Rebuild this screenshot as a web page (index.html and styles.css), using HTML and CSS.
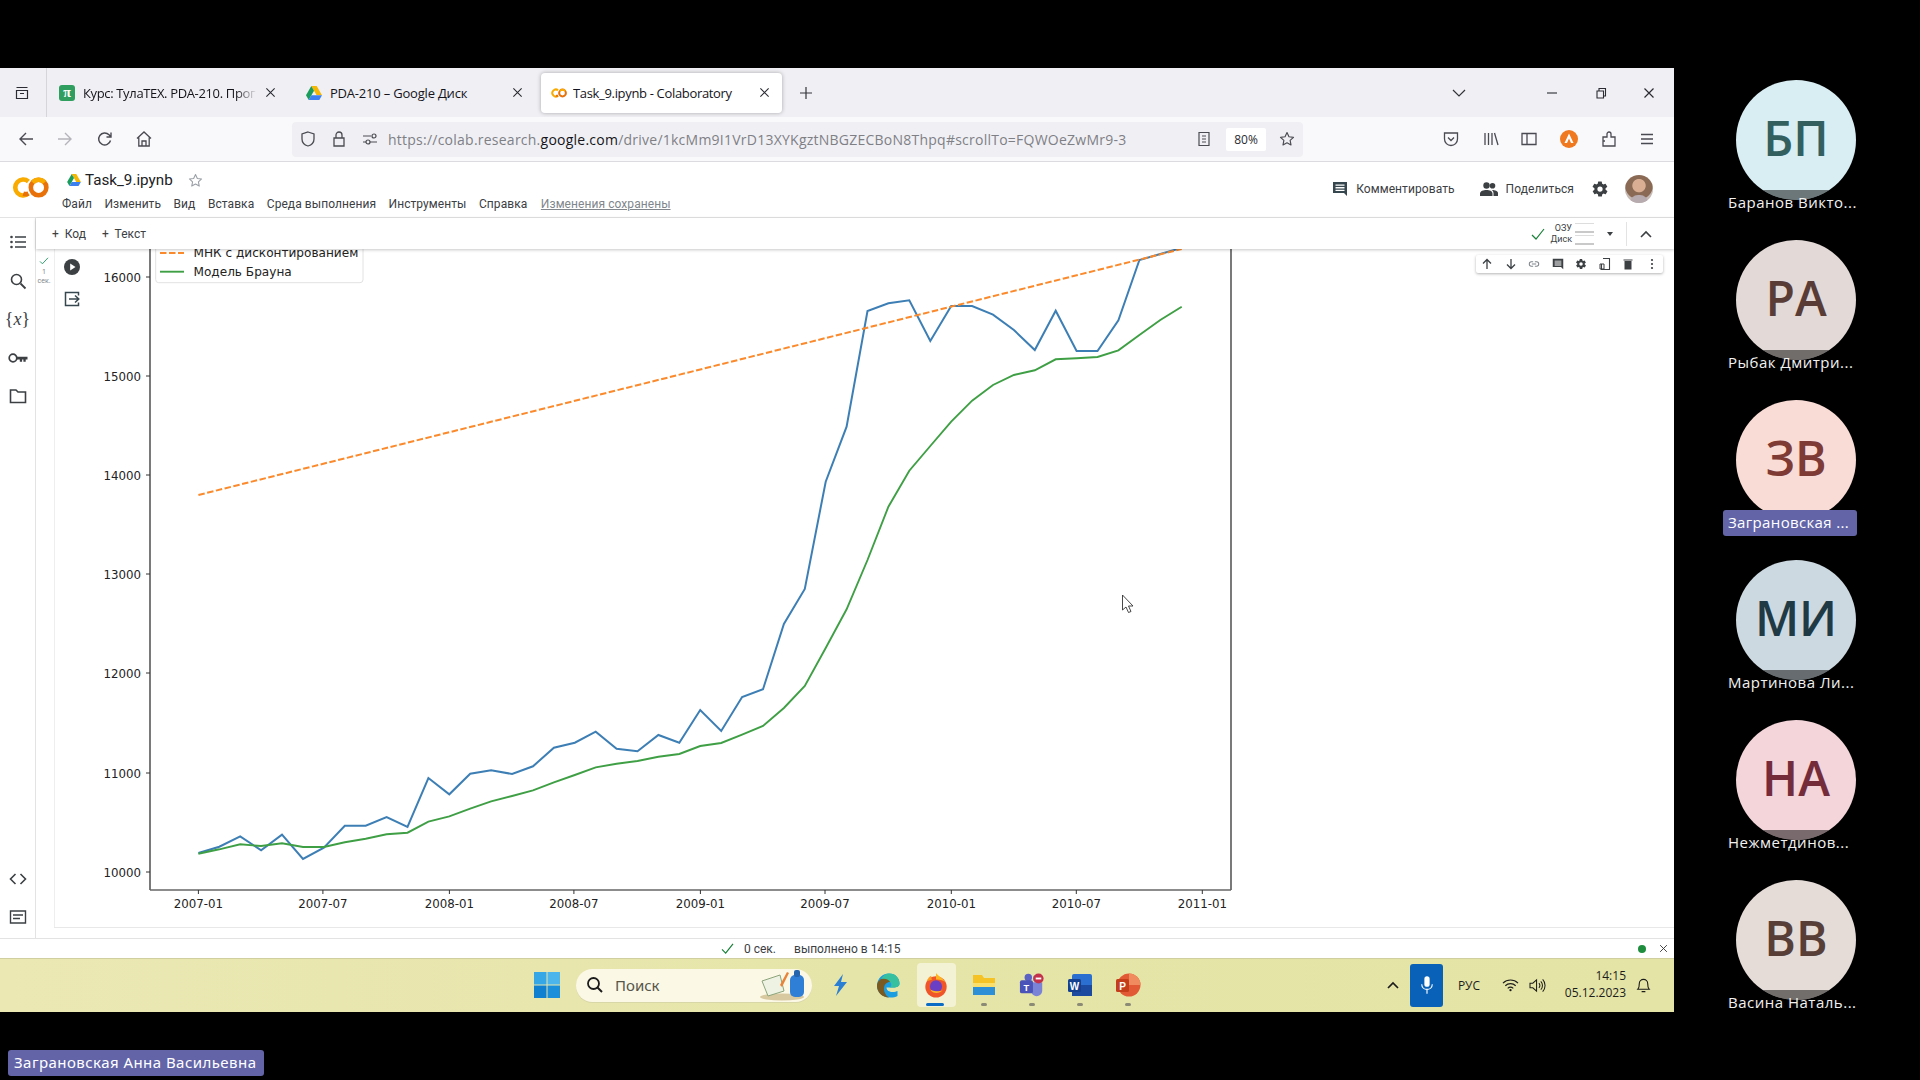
FILE: index.html
```html
<!DOCTYPE html>
<html lang="ru">
<head>
<meta charset="utf-8">
<title>Task_9.ipynb - Colaboratory</title>
<link rel="stylesheet" href="styles.css">
</head>
<body>
<svg class="defs" aria-hidden="true">
  <symbol id="i-colab" viewBox="0 0 35 20">
    <path d="M15.5 4.2A7.6 7.6 0 1 0 15.5 15.8" fill="none" stroke="#f9ab00" stroke-width="4.4"/>
    <path d="M10.6 15.8A7.6 7.6 0 0 0 15.5 15.8" fill="none" stroke="#e8710a" stroke-width="4.4"/>
    <circle cx="25.2" cy="10" r="7.4" fill="none" stroke="#e8710a" stroke-width="4.4"/>
    <path d="M19.6 5.2A7.4 7.4 0 0 1 30.8 5.2" fill="none" stroke="#f9ab00" stroke-width="4.4"/>
  </symbol>
  <symbol id="i-drive" viewBox="0 0 16 14">
    <path d="M5.3 0h5.4l5.3 9.2h-5.4z" fill="#f6b704"/>
    <path d="M5.3 0 0 9.2l2.7 4.8 5.3-9.2z" fill="#1a9c5b"/>
    <path d="M5.4 9.2H16L13.3 14H2.700z" fill="#3c7ff0"/>
  </symbol>
  <symbol id="i-x" viewBox="0 0 12 12"><path d="M1.500 1.500l9 9M10.500 1.500l-9 9" fill="none" stroke="currentColor" stroke-width="1.200"/></symbol>
  <symbol id="i-star" viewBox="0 0 18 18"><path d="M9 1.800l2.200 4.700 5.100.6-3.800 3.500 1 5.100L9 13.200l-4.500 2.500 1-5.100L1.700 7.100l5.100-.6z" fill="none" stroke="currentColor" stroke-width="1.300" stroke-linejoin="round"/></symbol>
  <symbol id="i-gear" viewBox="0 0 24 24"><path fill="currentColor" d="M19.400 13a7.500 7.500 0 0 0 0-2l2.100-1.600a.5.5 0 0 0 .1-.6l-2-3.500a.5.5 0 0 0-.6-.2l-2.500 1a7.300 7.300 0 0 0-1.700-1l-.4-2.700a.5.500 0 0 0-.5-.4h-4a.5.500 0 0 0-.5.4l-.4 2.700a7.300 7.300 0 0 0-1.700 1l-2.500-1a.5.500 0 0 0-.6.2l-2 3.500a.5.500 0 0 0 .1.600L4.600 11a7.500 7.500 0 0 0 0 2l-2.100 1.600a.5.500 0 0 0-.1.600l2 3.500c.1.200.4.300.6.200l2.500-1c.5.400 1.100.7 1.700 1l.4 2.700c0 .2.200.4.500.4h4c.3 0 .5-.2.500-.4l.4-2.700c.6-.3 1.200-.6 1.700-1l2.500 1c.2.100.5 0 .6-.2l2-3.500a.5.500 0 0 0-.1-.6zM12 15.500a3.500 3.500 0 1 1 0-7 3.500 3.500 0 0 1 0 7z"/></symbol>
  <symbol id="i-comment" viewBox="0 0 16 16"><path fill="currentColor" d="M1 1h14v14l-3-3H1zM3.500 3.500v1.300h9V3.500zm0 2.600v1.300h9V6.100zm0 2.600V10h9V8.700z" fill-rule="evenodd"/></symbol>
</svg>

<div class="stage">
  <div class="share">
    <div class="window">

      <div class="tabbar">
        <div class="tab-side">
          <svg class="ico16" viewBox="0 0 16 16"><path d="M2.500 2.500h11M2.500 5.500h11v8h-11zM6 8.500h4" fill="none" stroke="#2b2b33" stroke-width="1.200"/></svg>
        </div>
        <div class="tab">
          <span class="fav-pi">π</span>
          <span class="tab-title fade">Курс: ТулаТЕХ. PDA-210. Прог</span>
          <svg class="tab-x"><use href="#i-x"/></svg>
        </div>
        <div class="tab">
          <svg class="fav"><use href="#i-drive"/></svg>
          <span class="tab-title">PDA-210 – Google Диск</span>
          <svg class="tab-x"><use href="#i-x"/></svg>
        </div>
        <div class="tab tab-active">
          <svg class="fav"><use href="#i-colab"/></svg>
          <span class="tab-title tab-title-active">Task_9.ipynb - Colaboratory</span>
          <svg class="tab-x"><use href="#i-x"/></svg>
        </div>
        <svg class="tab-plus" viewBox="0 0 14 14"><path d="M7 1v12M1 7h12" stroke="#33333a" stroke-width="1.200"/></svg>
        <svg class="tab-list" viewBox="0 0 14 8"><path d="M1 1l6 6 6-6" fill="none" stroke="#33333a" stroke-width="1.200"/></svg>
        <div class="win-btn"><svg class="ico12" viewBox="0 0 12 12"><path d="M1 6h10" stroke="#2b2b33" stroke-width="1.100"/></svg></div>
        <div class="win-btn"><svg class="ico12" viewBox="0 0 12 12"><path d="M2 4h6.500v7H2zM4 4V1.500h6.500V9H8.500" fill="none" stroke="#2b2b33" stroke-width="1.100"/></svg></div>
        <div class="win-btn"><svg class="ico12"><use href="#i-x"/></svg></div>
      </div>

      <div class="navbar">
        <svg class="nav nav-back" viewBox="0 0 18 18"><path d="M16 9H3M9 3L3 9l6 6" fill="none" stroke="#4a4a52" stroke-width="1.400"/></svg>
        <svg class="nav nav-fwd" viewBox="0 0 18 18"><path d="M2 9h13M9 3l6 6-6 6" fill="none" stroke="#b4b4ba" stroke-width="1.400"/></svg>
        <svg class="nav nav-reload" viewBox="0 0 18 18"><path d="M14.500 10.500A6 6 0 1 1 13 4.800L15 7M15 2.500V7h-4.500" fill="none" stroke="#4a4a52" stroke-width="1.400"/></svg>
        <svg class="nav nav-home" viewBox="0 0 18 18"><path d="M2 8.500L9 2l7 6.500M3.800 7.500V16h10.400V7.500M7 16v-5h4v5" fill="none" stroke="#4a4a52" stroke-width="1.300"/></svg>
        <div class="urlbar">
          <svg class="ico16" viewBox="0 0 16 16"><path d="M8 1l6 2v5c0 3.500-2.500 6-6 7-3.500-1-6-3.500-6-7V3z" fill="none" stroke="#4a4a52" stroke-width="1.300"/></svg>
          <svg class="ico16 url-lock" viewBox="0 0 16 16"><path d="M3 7h10v8H3zM5 7V4a3 3 0 0 1 6 0v3" fill="none" stroke="#4a4a52" stroke-width="1.300"/></svg>
          <svg class="ico16 url-tune" viewBox="0 0 16 16"><path d="M1 5h8M1 11h3M8 11h7" stroke="#4a4a52" stroke-width="1.200"/><circle cx="12" cy="5" r="2" fill="none" stroke="#4a4a52" stroke-width="1.200"/><circle cx="6" cy="11" r="2" fill="none" stroke="#4a4a52" stroke-width="1.200"/></svg>
          <div class="url"><span class="url-dim">https://colab.research.</span><span class="url-host">google.com</span><span class="url-dim">/drive/1kcMm9I1VrD13XYKgztNBGZECBoN8Thpq#scrollTo=FQWOeZwMr9-3</span></div>
          <svg class="ico16" viewBox="0 0 16 16"><path d="M3 1.500h10v13H3zM6 5h4M6 8h4M6 11h4" fill="none" stroke="#4a4a52" stroke-width="1.200"/></svg>
          <div class="zoombox">80%</div>
          <svg class="ico16 url-star"><use href="#i-star"/></svg>
        </div>
        <svg class="tool tool-first" viewBox="0 0 18 18"><path d="M2.500 3h13v6a6.500 6.500 0 0 1-13 0z" fill="none" stroke="#4a4a52" stroke-width="1.300"/><path d="M6 7.500l3 3 3-3" fill="none" stroke="#4a4a52" stroke-width="1.300"/></svg>
        <svg class="tool tool-lib" viewBox="0 0 18 18"><path d="M3 3v12M6.500 3v12M10 3v12M12.500 3l3.500 12" fill="none" stroke="#4a4a52" stroke-width="1.300"/></svg>
        <svg class="tool tool-side" viewBox="0 0 18 18"><path d="M2 3.500h14v11H2zM7 3.500v11" fill="none" stroke="#4a4a52" stroke-width="1.300"/></svg>
        <svg class="tool tool-ava" viewBox="0 0 18 18"><circle cx="9" cy="9" r="9" fill="#f0781e"/><path d="M9 3.500L13.500 13H11L9 8.500 7 13H4.500z" fill="#fff"/></svg>
        <svg class="tool tool-ext" viewBox="0 0 18 18"><path d="M3 7h4V4a2 2 0 0 1 4 0v3h4v9H3zM3 11h2" fill="none" stroke="#4a4a52" stroke-width="1.300"/></svg>
        <svg class="tool tool-side" viewBox="0 0 18 18"><path d="M3 4.500h12M3 9h12M3 13.500h12" stroke="#4a4a52" stroke-width="1.300"/></svg>
      </div>

      <div class="colab-head">
        <svg class="colab-logo"><use href="#i-colab"/></svg>
        <div class="doc">
          <div class="doc-title">
            <svg class="doc-drive"><use href="#i-drive"/></svg>
            <span class="doc-name">Task_9.ipynb</span>
            <svg class="doc-star"><use href="#i-star"/></svg>
          </div>
          <div class="menu">
            <span>Файл</span><span>Изменить</span><span>Вид</span><span>Вставка</span><span>Среда выполнения</span><span>Инструменты</span><span>Справка</span><span class="saved">Изменения сохранены</span>
          </div>
        </div>
        <div class="head-right">
          <svg class="ico16"><use href="#i-comment"/></svg>
          <span class="head-link">Комментировать</span>
          <svg class="head-people" viewBox="0 0 18 14"><circle cx="6.500" cy="3.500" r="3.200" fill="#3c4043"/><circle cx="12.500" cy="3.800" r="2.800" fill="#3c4043"/><path d="M0 14v-2.500C0 9 3.500 8 6.500 8s6 1 6 3.500V14zM13.500 14v-3c0-1-.5-2-1.500-3 3 0 6 1 6 3v3z" fill="#3c4043"/></svg>
          <span class="head-link">Поделиться</span>
          <svg class="head-gear"><use href="#i-gear"/></svg>
          <div class="user-pic"><span class="user-face"></span></div>
        </div>
      </div>

      <div class="workspace">
        <div class="rail">
          <svg class="rail-ico" viewBox="0 0 18 18"><path d="M6 4h11M6 9h11M6 14h11" stroke="#3c4043" stroke-width="1.600"/><circle cx="2.500" cy="4" r="1.300" fill="#3c4043"/><circle cx="2.500" cy="9" r="1.300" fill="#3c4043"/><circle cx="2.500" cy="14" r="1.300" fill="#3c4043"/></svg>
          <svg class="rail-ico" viewBox="0 0 18 18"><circle cx="7.500" cy="7.500" r="5" fill="none" stroke="#3c4043" stroke-width="1.600"/><path d="M11.500 11.500L16.500 16.500" stroke="#3c4043" stroke-width="1.800"/></svg>
          <span class="rail-x">{<i>x</i>}</span>
          <svg class="rail-key" viewBox="0 0 20 14"><circle cx="5" cy="7" r="3.800" fill="none" stroke="#3c4043" stroke-width="1.700"/><path d="M8.500 5.800h11v2.600h-1.800v2.300h-2.300V8.400h-1.300v2.300h-2.300V8.400H8.500z" fill="#3c4043"/></svg>
          <svg class="rail-ico" viewBox="0 0 18 18"><path d="M1.500 3h5.500l2 2h7.500v10.500h-15z" fill="none" stroke="#3c4043" stroke-width="1.600"/></svg>
          <svg class="rail-ico rail-bottom" viewBox="0 0 18 18"><path d="M6.500 4L1.500 9l5 5M11.500 4l5 5-5 5" fill="none" stroke="#3c4043" stroke-width="1.600"/></svg>
          <svg class="rail-ico" viewBox="0 0 18 18"><path d="M1.500 3h15v12h-15zM4 7h10M4 10.500h7" fill="none" stroke="#3c4043" stroke-width="1.400"/></svg>
        </div>
        <div class="work-main">
          <div class="cell-bar">
            <span class="add">+ Код</span>
            <span class="add">+ Текст</span>
            <div class="res">
              <svg class="res-check" viewBox="0 0 14 12"><path d="M1 7l4 4 8-10" fill="none" stroke="#188038" stroke-width="1.200"/></svg>
              <div class="res-labels"><span>ОЗУ</span><span>Диск</span></div>
              <div class="res-bars"><span></span><span></span></div>
              <span class="res-drop"></span>
              <span class="res-sep"></span>
              <svg class="res-up" viewBox="0 0 12 8"><path d="M1 7l5-5 5 5" fill="none" stroke="#3c4043" stroke-width="1.600"/></svg>
            </div>
          </div>
          <div class="notebook">
            <div class="cell">
              <div class="exec">
                <svg class="exec-check" viewBox="0 0 12 10"><path d="M1 5.500l3 3 7-7.500" fill="none" stroke="#2a9d6a" stroke-width="1.200"/></svg>
                <span class="exec-n">1</span>
                <span class="exec-s">сек.</span>
              </div>
              <div class="run">
                <svg class="run-play" viewBox="0 0 16 16"><circle cx="8" cy="8" r="8" fill="#3c4043"/><path d="M6.200 4.500l5.300 3.500-5.300 3.500z" fill="#fff"/></svg>
                <svg class="run-out" viewBox="0 0 16 16"><path d="M14.500 4.500V1.500h-13v13h13v-3M5 8h9.500M11 4.500L14.800 8 11 11.500" fill="none" stroke="#37474f" stroke-width="1.500"/></svg>
              </div>
              <svg class="chart" viewBox="90 249 1150 679">
                <rect x="155.700" y="225" width="207.300" height="57.700" rx="3" class="legend-box"/>
                <path d="M150 240V890M1231 240V890" class="spine"/>
                <path d="M150 890H1231" class="spine-bottom"/>
                <path d="M146 277H150M146 376H150M146 475H150M146 574H150M146 673H150M146 773H150M146 872H150" class="tick"/>
                <path d="M198.400 890v4M322.900 890v4M449.400 890v4M573.900 890v4M700.400 890v4M825 890v4M951.300 890v4M1076.300 890v4M1202.300 890v4" class="tick"/>
                <g class="ylabels">
                  <text x="141" y="281.500">16000</text>
                  <text x="141" y="380.500">15000</text>
                  <text x="141" y="479.500">14000</text>
                  <text x="141" y="578.500">13000</text>
                  <text x="141" y="677.500">12000</text>
                  <text x="141" y="777.500">11000</text>
                  <text x="141" y="876.500">10000</text>
                </g>
                <g class="xlabels">
                  <text x="198.400" y="907.500">2007-01</text>
                  <text x="322.900" y="907.500">2007-07</text>
                  <text x="449.400" y="907.500">2008-01</text>
                  <text x="573.900" y="907.500">2008-07</text>
                  <text x="700.400" y="907.500">2009-01</text>
                  <text x="825" y="907.500">2009-07</text>
                  <text x="951.300" y="907.500">2010-01</text>
                  <text x="1076.300" y="907.500">2010-07</text>
                  <text x="1202.300" y="907.500">2011-01</text>
                </g>
                <polyline class="line-blue" points="198.400,853 219.300,846.700 240.200,836.300 261.100,850.300 282,834.700 303,859 323.900,847.700 344.800,825.700 365.700,825.700 386.600,817 407.500,827 428.400,778 449.300,794.300 470.200,773.700 491.100,770.300 512.100,774 533,766.300 553.900,747.700 574.800,742.700 595.700,731.700 616.600,748.700 637.500,751.300 658.400,735 679.300,742.700 700.200,710 721.200,731 742.100,697 763,689.300 783.900,624 804.800,589 825.700,481.700 846.600,426.700 867.500,311 888.400,303.300 909.300,300.300 930.300,341 951.200,306 972.100,306 993,314.700 1013.900,330 1034.800,350 1055.700,310.700 1076.600,351 1097.500,351 1118.400,320.300 1139.400,260 1160.300,254 1181.200,248"/>
                <line class="line-orange" x1="198.400" y1="495" x2="1181.700" y2="249"/>
                <polyline class="line-green" points="198.400,853.700 219.300,849.300 240.200,844.300 261.100,846 282,843.300 303,847 323.900,847 344.800,842.300 365.700,838.700 386.600,834.300 407.500,832.700 428.400,821.700 449.300,816.300 470.200,808.700 491.100,801.300 512.100,796 533,790.300 553.900,782.300 574.800,775 595.700,767.300 616.600,763.700 637.500,761 658.400,756.700 679.300,754 700.200,746 721.200,743 742.100,734.700 763,726 783.900,708 804.800,686 825.700,648 846.600,609.300 867.500,560 888.400,506.700 909.300,470.700 930.300,446 951.200,421.700 972.100,400.700 993,385 1013.900,375 1034.800,370.300 1055.700,359.300 1076.600,358.300 1097.500,357 1118.400,350.300 1139.400,335 1160.300,320 1181.700,306.700"/>
                <line class="line-orange" x1="160" y1="253" x2="184" y2="253"/>
                <line class="line-green" x1="160" y1="271.700" x2="184" y2="271.700"/>
                <text class="legend-text" x="193.500" y="257">МНК с дисконтированием</text>
                <text class="legend-text" x="193.500" y="276">Модель Брауна</text>
                <path class="cursor" d="M1122.500 595v15l3.500-3 2.500 5.500 2.500-1-2.500-5.500h4.500z"/>
              </svg>
            </div>
            <div class="cell-tools">
              <svg class="ct" viewBox="0 0 12 12"><path d="M6 11V1.500M2 5.500l4-4 4 4" fill="none" stroke="#3c4043" stroke-width="1.300"/></svg>
              <svg class="ct" viewBox="0 0 12 12"><path d="M6 1v9.500M2 6.500l4 4 4-4" fill="none" stroke="#3c4043" stroke-width="1.300"/></svg>
              <svg class="ct" viewBox="0 0 14 12"><path d="M6 3.500H4a2.500 2.500 0 0 0 0 5h2M8 3.500h2a2.500 2.500 0 0 1 0 5H8M4.500 6h5" fill="none" stroke="#80868b" stroke-width="1.200"/></svg>
              <svg class="ct"><use href="#i-comment"/></svg>
              <svg class="ct"><use href="#i-gear"/></svg>
              <svg class="ct" viewBox="0 0 12 12"><path d="M4 .5h6.500v11H2.500V6" fill="none" stroke="#3c4043" stroke-width="1.100"/><path d="M1 6h4v5H1z" fill="none" stroke="#3c4043" stroke-width="1"/></svg>
              <svg class="ct" viewBox="0 0 12 12"><path d="M2.500 3h7v8.500h-7zM1.500 1.500h9v1h-9z" fill="#3c4043"/></svg>
              <svg class="ct" viewBox="0 0 12 12"><circle cx="6" cy="2" r="1.100" fill="#3c4043"/><circle cx="6" cy="6" r="1.100" fill="#3c4043"/><circle cx="6" cy="10" r="1.100" fill="#3c4043"/></svg>
            </div>
          </div>
        </div>
      </div>

      <div class="statusbar">
        <svg class="st-check" viewBox="0 0 14 12"><path d="M1 7l4 4 8-10" fill="none" stroke="#188038" stroke-width="1.300"/></svg>
        <span class="st-time">0 сек.</span>
        <span class="st-done">выполнено в 14:15</span>
        <span class="st-dot"></span>
        <svg class="st-x"><use href="#i-x"/></svg>
      </div>

      <div class="taskbar">
        <svg class="win-logo" viewBox="0 0 26 26"><rect width="12.500" height="12.500" fill="#35a7e6"/><rect x="13.500" width="12.500" height="12.500" fill="#4cb6ec"/><rect y="13.500" width="12.500" height="12.500" fill="#0f7fd0"/><rect x="13.500" y="13.500" width="12.500" height="12.500" fill="#1c8fdb"/></svg>
        <div class="search">
          <svg class="search-q" viewBox="0 0 18 18"><circle cx="7.500" cy="7.500" r="5.500" fill="none" stroke="#1c1c1c" stroke-width="1.800"/><path d="M11.500 11.500L16 16" stroke="#1c1c1c" stroke-width="2"/></svg>
          <span class="search-text">Поиск</span>
          <svg class="search-art" viewBox="0 0 46 32"><ellipse cx="22" cy="28" rx="22" ry="3.500" fill="#d9c9a0"/><path d="M2 12l18-6 4 16-16 5z" fill="#eef2e2" stroke="#8aa47a"/><path d="M20 16L27 3l2 1-7 14z" fill="#e8843a"/><rect x="30" y="6" width="14" height="22" rx="5" fill="#2f7fd6"/><rect x="34" y="1" width="6" height="7" rx="2" fill="#2565ad"/></svg>
        </div>
        <div class="apps">
          <div class="app">
            <svg class="app-ico" viewBox="0 0 26 26"><path d="M16 2L7 14h5l-3 10 11-14h-6z" fill="#2a7fd5"/></svg>
          </div>
          <div class="app">
            <svg class="app-ico" viewBox="0 0 26 26"><path d="M2 14C2 6 8 1.500 14 1.500c7 0 10.500 5 10.500 10 0 3-3 4-6 4h-7c0 3 3 4.500 6 4.500 2 0 4-.5 5-1v5c-2 1-4 1.500-7 1.500C7 25.500 2 20 2 14z" fill="#1b9de2"/><path d="M2 14c0-5 4-8 8-8 3 0 5 2 5 4-3 0-6 2-6 7 0 3 2 7 5 8.500C7 25.500 2 20 2 14z" fill="#7a5a20"/><path d="M14 1.500c7 0 10.500 5 10.500 10 0 3-3 4-6 4h-4c2-1 2.500-3 1-5C14 8 11 6 6 7c2-3.500 5-5.500 8-5.500z" fill="#35c1a0"/></svg>
          </div>
          <div class="app app-on">
            <svg class="app-ico" viewBox="0 0 26 28"><circle cx="13" cy="16" r="11.500" fill="#f0552a"/><path d="M13 1c2 3 7 5 10 10-2-2-5-3-10-3z" fill="#ffb51f"/><path d="M3 10c1-3 3-5 5-6-.5 2 0 3 1 4z" fill="#ff9a1f"/><circle cx="13" cy="15.500" r="6.500" fill="#6b3fc4"/><path d="M7 19c2 4 9 5 13 1-3 1-8 1-13-1z" fill="#ffb51f"/></svg>
            <span class="app-bar"></span>
          </div>
          <div class="app">
            <svg class="app-ico" viewBox="0 0 26 26"><path d="M2 3h9l2 3h11v17H2z" fill="#f6c327"/><path d="M2 14h22v9H2z" fill="#2d8fd5"/><path d="M2 11h22v4H2z" fill="#fadf6b"/></svg>
            <span class="app-dot"></span>
          </div>
          <div class="app">
            <svg class="app-ico" viewBox="0 0 28 26"><circle cx="19" cy="6" r="4" fill="#7b83d6"/><circle cx="10" cy="5" r="4" fill="#5b62c4"/><path d="M13 10h12v9c0 3-2 6-6 6s-6-3-6-6z" fill="#7b83d6"/><rect x="1" y="8" width="14" height="14" rx="2" fill="#4b53b8"/><text x="8" y="19" class="app-letter">T</text><circle cx="21" cy="6" r="5.500" fill="#c4314b"/><rect x="18" y="5" width="6" height="2" fill="#fff"/></svg>
            <span class="app-dot"></span>
          </div>
          <div class="app">
            <svg class="app-ico" viewBox="0 0 26 26"><rect x="5" y="2" width="20" height="22" rx="2" fill="#2b6fd0"/><rect x="5" y="13" width="20" height="11" fill="#1b4a9e"/><rect x="1" y="7" width="13" height="13" rx="1.500" fill="#15408f"/><text x="7.500" y="17.500" class="app-letter">W</text></svg>
            <span class="app-dot"></span>
          </div>
          <div class="app">
            <svg class="app-ico" viewBox="0 0 26 26"><circle cx="14" cy="13" r="11.500" fill="#e25a35"/><path d="M14 1.500A11.500 11.500 0 0 1 25.500 13H14z" fill="#f08b5f"/><rect x="1" y="7" width="13" height="13" rx="1.500" fill="#c43e1c"/><text x="7.500" y="17.500" class="app-letter">P</text></svg>
            <span class="app-dot"></span>
          </div>
        </div>
        <div class="tray">
          <svg class="tray-up" viewBox="0 0 12 8"><path d="M1 7l5-5 5 5" fill="none" stroke="#1c1c1c" stroke-width="1.700"/></svg>
          <div class="mic"><svg class="mic-ico" viewBox="0 0 16 22"><rect x="5" y="1" width="6" height="12" rx="3" fill="#fff"/><path d="M2 10c0 4 3 6 6 6s6-2 6-6M8 16v5" fill="none" stroke="#fff" stroke-width="1.300"/></svg></div>
          <span class="lang">РУС</span>
          <svg class="tray-wifi" viewBox="0 0 18 14"><path d="M1 5a11.500 11.500 0 0 1 16 0M3.500 7.800a8 8 0 0 1 11 0M6 10.500a4.500 4.500 0 0 1 6 0" fill="none" stroke="#1c1c1c" stroke-width="1.200"/><circle cx="9" cy="12.500" r="1.200" fill="#1c1c1c"/></svg>
          <svg class="tray-sound" viewBox="0 0 18 16"><path d="M1 5.500h3l4-3.500v12l-4-3.500H1zM10.500 5.500a3.500 3.500 0 0 1 0 5M12.500 3.500a6.500 6.500 0 0 1 0 9M14.500 1.500a9.500 9.500 0 0 1 0 13" fill="none" stroke="#1c1c1c" stroke-width="1.100"/></svg>
          <div class="clock"><span>14:15</span><span>05.12.2023</span></div>
          <svg class="tray-bell" viewBox="0 0 16 18"><path d="M2 13c1.500-1.500 1.500-3 1.500-6a4.500 4.500 0 0 1 9 0c0 3 0 4.500 1.500 6zM6 15.500h4" fill="none" stroke="#1c1c1c" stroke-width="1.200"/></svg>
        </div>
      </div>

    </div>
    <div class="footer">
      <span class="presenter">Заграновская Анна Васильевна</span>
    </div>
  </div>

  <aside class="people">
    <div class="tile">
      <div class="avatar av-1">БП</div>
      <div class="name"><span>Баранов Викто...</span></div>
    </div>
    <div class="tile">
      <div class="avatar av-2">РА</div>
      <div class="name"><span>Рыбак Дмитри...</span></div>
    </div>
    <div class="tile">
      <div class="avatar av-3">ЗВ</div>
      <div class="name name-active"><span>Заграновская ...</span></div>
    </div>
    <div class="tile">
      <div class="avatar av-4">МИ</div>
      <div class="name"><span>Мартинова Ли...</span></div>
    </div>
    <div class="tile">
      <div class="avatar av-5">НА</div>
      <div class="name"><span>Нежметдинов...</span></div>
    </div>
    <div class="tile">
      <div class="avatar av-6">ВВ</div>
      <div class="name"><span>Васина Наталь...</span></div>
    </div>
  </aside>
</div>
</body>
</html>
```

FILE: styles.css
```css
* { box-sizing: border-box; }
html, body { margin: 0; padding: 0; }
body { width: 1920px; height: 1080px; overflow: hidden; background: #000; font-family: "Noto Sans", "Liberation Sans", sans-serif; }
svg { display: block; flex: none; }
.defs { display: none; }
.ico16 { width: 16px; height: 16px; color: #4a4a52; }
.ico12 { width: 12px; height: 12px; color: #2b2b33; }

.stage { display: flex; width: 1920px; height: 1080px; }
.share { width: 1674px; padding-top: 68px; display: flex; flex-direction: column; }
.window { height: 944px; display: flex; flex-direction: column; background: #fff; }
.footer { padding: 38px 0 0 8px; }
.presenter { display: inline-block; width: 256px; height: 26px; line-height: 25px; background: #6264a7; border-radius: 3px; color: #fff; font-size: 15px; letter-spacing: .45px; padding-left: 6px; white-space: nowrap; }

/* tab strip */
.tabbar { height: 49px; background: #f0f0f4; display: flex; align-items: center; font-family: "Open Sans", sans-serif; font-size: 13px; color: #15141a; }
.tab-side { width: 47px; height: 49px; border-right: 1px solid #d6d6da; display: flex; align-items: center; padding-left: 14px; }
.tab { width: 241px; height: 40px; margin-right: 6px; display: flex; align-items: center; padding: 0 11px 0 12px; gap: 8px; border-radius: 4px; }
.tab-active { background: #fff; box-shadow: 0 0 4px rgba(0,0,0,.3); margin-right: 0; gap: 6px; padding-left: 10px; }
.fav { width: 16px; height: 14px; }
.fav-pi { width: 16px; height: 16px; border-radius: 3px; background: #2f9e5f; color: #fff; font: bold 14px/15px "Liberation Serif", serif; text-align: center; flex: none; }
.tab-title { flex: 1; white-space: nowrap; overflow: hidden; font-size: 13px; letter-spacing: -.2px; }
.tab-title-active { letter-spacing: -.33px; }
.fade { -webkit-mask-image: linear-gradient(to right, #000 88%, transparent 100%); mask-image: linear-gradient(to right, #000 88%, transparent 100%); letter-spacing: -.35px; }
.tab-x { width: 11px; height: 11px; color: #2b2b33; margin-right: 1px; }
.tab-plus { width: 14px; height: 14px; margin-left: 17px; }
.tab-list { width: 14px; height: 8px; margin-left: auto; margin-right: 61px; }
.win-btn { width: 49px; height: 49px; display: flex; align-items: center; justify-content: center; }
.win-btn:last-child { padding-right: 2px; }

/* url toolbar */
.navbar { height: 45px; background: #f9f9fb; border-bottom: 1px solid #dcdce0; display: flex; align-items: center; padding-left: 17px; }
.nav { width: 18px; height: 18px; }
.nav-fwd { margin-left: 21px; }
.nav-reload { margin-left: 22px; }
.nav-home { margin-left: 21px; }
.urlbar { width: 1011px; height: 35px; margin-left: 139px; background: #f0f0f4; border-radius: 4px; display: flex; align-items: center; padding: 0 8px 0 8px; }
.url-lock { margin-left: 15px; }
.url-tune { margin-left: 15px; }
.url { flex: 1; margin-left: 10px; font: 14px "Open Sans", sans-serif; letter-spacing: .24px; white-space: nowrap; overflow: hidden; }
.url-dim { color: #7f7f86; }
.url-host { color: #15141a; }
.zoombox { width: 40px; height: 23px; margin-left: 14px; background: #fff; border-radius: 2px; font: 12px/23px "Open Sans", sans-serif; text-align: center; color: #2b2b33; }
.url-star { margin-left: 13px; }
.tool { width: 18px; height: 18px; }
.tool-first { margin-left: 139px; }
.tool-lib { margin-left: 22px; }
.tool-side { margin-left: 20px; }
.tool-ava { margin-left: 22px; }
.tool-ext { margin-left: 22px; }

/* colab header */
.colab-head { height: 56px; background: #fff; border-bottom: 1px solid #e3e3e3; display: flex; align-items: flex-start; padding-left: 12px; }
.colab-logo { width: 37px; height: 21px; margin-top: 15px; }
.doc { margin-left: 13px; padding-top: 8px; }
.doc-title { height: 20px; display: flex; align-items: center; }
.doc-drive { width: 14px; height: 12px; margin-left: 5px; }
.doc-name { margin-left: 4px; font: 15.200px Roboto, sans-serif; color: #202124; }
.doc-star { width: 15px; height: 15px; margin-left: 15px; color: #9aa0a6; }
.menu { display: flex; gap: 12.500px; margin-top: 6px; font: 12px/16px Roboto, sans-serif; letter-spacing: .07px; color: #3c4043; white-space: nowrap; }
.saved { color: #80868b; text-decoration: underline; margin-left: 1px; }
.head-right { margin-left: auto; display: flex; align-items: center; padding: 13px 21px 0 0; color: #202124; }
.head-right .ico16 { color: #37474f; }
.head-link { margin-left: 8px; font: 12px Roboto, sans-serif; letter-spacing: .08px; color: #3c4043; }
.head-people { width: 18px; height: 14px; margin-left: 25px; }
.head-gear { width: 18px; height: 18px; margin-left: 17px; color: #3c4043; }
.user-pic { width: 28px; height: 28px; margin-left: 16px; border-radius: 50%; background: radial-gradient(circle at 50% 38%, #d9ae93 0 28%, #8a6a55 32% 60%, #c5b9b4 64%); display: flex; align-items: flex-end; justify-content: center; overflow: hidden; }
.user-face { width: 18px; height: 8px; background: #b7abb0; border-radius: 8px 8px 0 0; }

/* workspace */
.workspace { height: 720px; display: flex; }
.rail { width: 36px; border-right: 1px solid #e3e3e3; display: flex; flex-direction: column; align-items: center; padding: 15px 0 12px; gap: 20.500px; }
.rail-ico { width: 18px; height: 18px; }
.rail-key { width: 20px; height: 18px; }
.rail-x { height: 18px; font: 18px/18px "Liberation Serif", serif; color: #3c4043; white-space: nowrap; }
.rail-bottom { margin-top: auto; }
.work-main { flex: 1; display: flex; flex-direction: column; min-width: 0; position: relative; }
.cell-bar { height: 31px; display: flex; align-items: center; padding-left: 16px; gap: 16px; font: 12px Roboto, sans-serif; word-spacing: 3px; color: #3c4043; box-shadow: 0 1px 3px rgba(0,0,0,.22); position: relative; z-index: 2; background: #fff; }
.add { white-space: nowrap; }
.res { margin-left: auto; display: flex; align-items: center; }
.res-check { width: 14px; height: 12px; }
.res-labels { display: flex; flex-direction: column; align-items: flex-end; font-size: 9px; line-height: 11px; margin-left: 5px; width: 22px; color: #3c4043; }
.res-bars { display: flex; flex-direction: column; gap: 2px; margin-left: 3px; }
.res-bars span { display: block; width: 19px; height: 10px; border-top: 1px solid #ddd; border-bottom: 2px solid #c9c9c9; }
.res-drop { width: 0; height: 0; border: 3.500px solid transparent; border-top: 4px solid #3c4043; margin: 4px 0 0 13px; }
.res-sep { width: 1px; height: 24px; background: #e3e3e3; margin-left: 13px; }
.res-up { width: 12px; height: 8px; margin: 0 22px 0 13px; }

.notebook { height: 689px; background: #fff; position: relative; }
.cell { height: 679px; display: flex; border-bottom: 1px solid #e8e8e8; margin-left: 18px; }
.exec { width: 0; margin-left: -10px; display: flex; flex-direction: column; align-items: center; padding-top: 8px; font-size: 7px; color: #80868b; }
.exec-check { width: 10px; height: 8px; flex: none; }
.exec-n { line-height: 11px; margin-top: 1px; }
.exec-s { line-height: 9px; font-family: Roboto, sans-serif; }
.run { width: 36px; margin-left: 10px; border-left: 1px solid #eee; display: flex; flex-direction: column; align-items: center; padding: 10px 2px 0 0; gap: 16px; }
.run-play { width: 16px; height: 16px; }
.run-out { width: 16px; height: 16px; }
.chart { width: 1150px; height: 679px; overflow: hidden; }
.spine { fill: none; stroke: #222; stroke-width: 1.200; }
.spine-bottom { stroke: #666; stroke-width: 1.500; }
.tick { stroke: #333; stroke-width: 1; fill: none; }
.ylabels text { font: 11.800px "DejaVu Sans", sans-serif; fill: #222; text-anchor: end; }
.xlabels text { font: 11.800px "DejaVu Sans", sans-serif; fill: #222; text-anchor: middle; }
.legend-box { fill: #fff; stroke: #e2e2e2; stroke-width: 1; }
.legend-text { font: 12.100px "DejaVu Sans", sans-serif; fill: #222; }
.line-blue { fill: none; stroke: #3d7fb5; stroke-width: 2; }
.line-green { fill: none; stroke: #3f9f45; stroke-width: 1.900; }
.line-orange { stroke: #fb8a2c; stroke-width: 2; stroke-dasharray: 6.500 2.500; }
.cursor { fill: #fff; stroke: #333; stroke-width: .9; }
.cell-tools { position: absolute; top: 6px; right: 11px; width: 187px; height: 18px; background: #fff; box-shadow: 0 1px 3px rgba(0,0,0,.3); border-radius: 2px; display: flex; align-items: center; justify-content: space-between; padding: 0 5px; color: #3c4043; z-index: 3; }
.ct { width: 12px; height: 12px; }

/* status */
.statusbar { height: 20px; background: #fff; border-top: 1px solid #e3e3e3; display: flex; align-items: center; font: 12px Roboto, sans-serif; color: #3c4043; padding-left: 721px; }
.st-check { width: 13px; height: 11px; }
.st-time { margin-left: 10px; }
.st-done { margin-left: 18px; }
.st-dot { width: 8px; height: 8px; border-radius: 50%; background: #1e8e3e; margin-left: auto; margin-right: -1px; }
.st-x { width: 9px; height: 9px; margin: 0 6px 0 14px; color: #333; }

/* taskbar */
.taskbar { height: 54px; background: linear-gradient(to right, #ebe8b4, #e6e5a9 50%, #e4e4a6); box-shadow: inset 0 1px 0 #cfcfa0; display: flex; align-items: center; padding-left: 534px; }
.win-logo { width: 26px; height: 26px; }
.search { width: 236px; height: 33px; margin-left: 16px; background: #fbf8e6; border-radius: 17px; display: flex; align-items: center; padding: 0 6px 0 10px; box-shadow: 0 1px 0 #d8d7a8; }
.search-q { width: 18px; height: 18px; }
.search-text { margin-left: 11px; font-size: 15px; color: #55554a; }
.search-art { width: 46px; height: 32px; margin-left: auto; }
.apps { display: flex; margin-left: 4px; height: 54px; }
.app { width: 48px; height: 54px; display: flex; flex-direction: column; align-items: center; justify-content: center; position: relative; }
.app-ico { width: 26px; height: 26px; }
.app-on::before { content: ""; position: absolute; left: 5px; right: 4px; top: 5px; bottom: 5px; background: rgba(255,255,255,.5); border-radius: 4px; }
.app-on .app-ico { position: relative; }
.app-bar { position: absolute; bottom: 6px; left: 14px; width: 18px; height: 3px; background: #0a6cc4; border-radius: 2px; }
.app-dot { position: absolute; bottom: 6px; left: 21px; width: 6px; height: 3px; background: #8a8a76; border-radius: 2px; }
.app-letter { font: bold 10px "Liberation Sans", sans-serif; fill: #fff; text-anchor: middle; }
.tray { margin-left: auto; display: flex; align-items: center; padding-right: 23px; }
.tray-up { width: 12px; height: 8px; }
.mic { width: 33px; height: 43px; margin-left: 11px; background: #0a62b8; border-radius: 3px; display: flex; align-items: center; justify-content: center; }
.mic-ico { width: 14px; height: 20px; }
.lang { margin-left: 14px; font: 12px "Open Sans", sans-serif; color: #1c1c1c; width: 24px; text-align: center; }
.tray-wifi { width: 17px; height: 14px; margin-left: 21px; }
.tray-sound { width: 17px; height: 15px; margin-left: 10px; }
.clock { width: 72px; margin-left: 8px; margin-top: -2px; display: flex; flex-direction: column; align-items: flex-end; font: 12px/17px "Open Sans", sans-serif; color: #1c1c1c; }
.tray-bell { width: 15px; height: 17px; margin-left: 10px; }

/* participants */
.people { width: 246px; padding-top: 80px; display: flex; flex-direction: column; gap: 24px; }
.tile { height: 136px; padding-left: 50px; }
.avatar { width: 120px; height: 120px; margin-left: 12px; border-radius: 50%; display: flex; align-items: center; justify-content: center; font: 600 48px/1 "Open Sans", sans-serif; position: relative; overflow: hidden; padding-bottom: 4px; }
.avatar::after { content: ""; position: absolute; left: 0; right: 0; bottom: 0; height: 10px; background: rgba(0,0,0,.5); }
.name { height: 26px; margin-top: -11px; position: relative; display: flex; margin-left: -1px; }
.name span { color: #f2f2f2; font: 15px/26px "Open Sans", sans-serif; letter-spacing: .5px; padding: 0 5px; white-space: nowrap; }
.name-active { margin-top: -10px; }
.name-active span { width: 134px; background: #6264a7; border-radius: 3px; color: #fff; overflow: hidden; line-height: 24px; letter-spacing: .35px; }
.av-1 { background: #d9eef3; color: #33605f; }
.av-2 { background: #e3dad7; color: #5a3c36; }
.av-3 { background: #fadcd6; color: #7e3a34; }
.av-3::after { display: none; }
.av-4 { background: #ccd9e0; color: #1f3a45; }
.av-5 { background: #f3d5da; color: #742c3b; }
.av-6 { background: #e5dcd8; color: #573f38; }
```
